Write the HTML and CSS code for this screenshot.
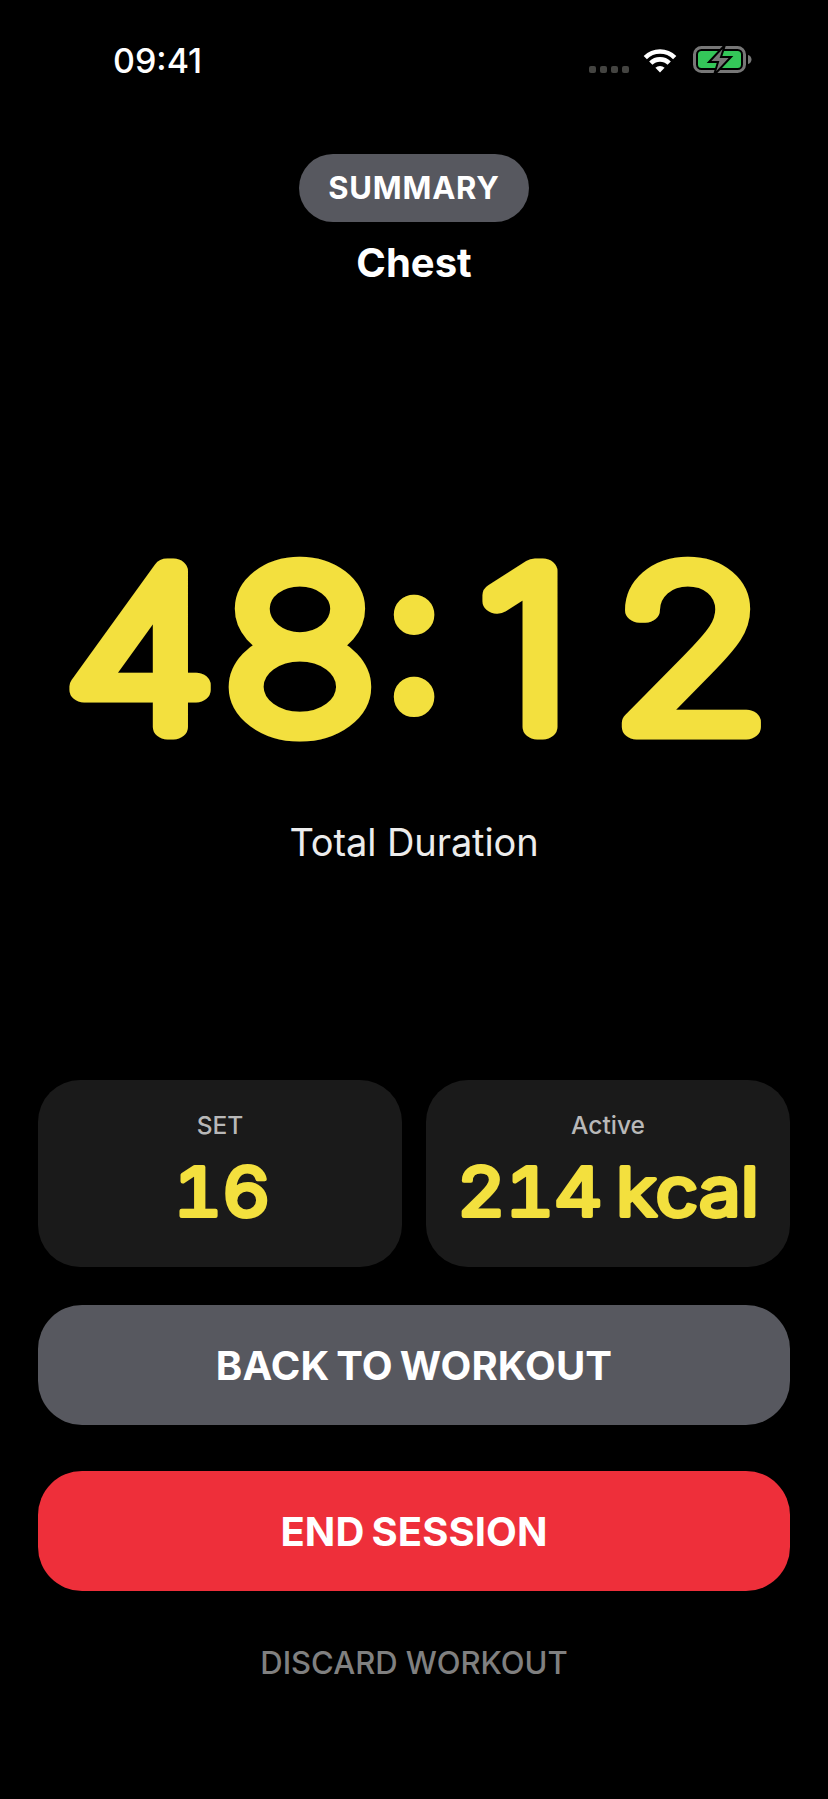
FILE: index.html
```html
<!DOCTYPE html>
<html lang="en">
<head>
  <meta charset="UTF-8">
  <meta name="viewport" content="width=device-width, initial-scale=1.0">
  <title>Summary</title>
  <link rel="stylesheet" href="styles.css">
</head>
<body>
  <div id="screen">
    <div class="status-bar">
      <span class="clock">09:41</span>
      <div class="status-icons">
        <div class="signal"><i></i><i></i><i></i><i></i></div>
        <svg class="wifi" width="36" height="26" viewBox="0 0 36 26">
          <path d="M18 25.500l-4.600-4.700a6.500 6.500 0 0 1 9.200 0z" fill="#fff"/>
          <path d="M8.800 16.200a13 13 0 0 1 18.400 0" fill="none" stroke="#fff" stroke-width="4.600"/>
          <path d="M3.300 10.600a20.800 20.800 0 0 1 29.400 0" fill="none" stroke="#fff" stroke-width="4.600"/>
        </svg>
        <svg class="battery" width="59" height="32" viewBox="0 0 59 32">
          <rect x="1.500" y="3.500" width="50" height="24" rx="7" fill="none" stroke="#777" stroke-width="3"/>
          <rect x="5" y="7" width="43" height="17" rx="3.500" fill="#34c759"/>
          <path d="M55 11c2 .4 3.500 2.200 3.500 4.500s-1.500 4.100-3.500 4.500z" fill="#777"/>
          <path d="M32 1L16 18h9l-4 13 17-18h-10z" fill="#777" stroke="#000" stroke-width="2"/>
        </svg>
      </div>
    </div>

    <header class="top">
      <div class="pill">SUMMARY</div>
      <div class="workout-name">Chest</div>
    </header>

    <main class="timer-block">
      <svg class="timer" width="828" height="300" viewBox="0 0 828 300">
        <text class="digits" x="119.700 256.400" y="247">48</text>
        <text class="colon" x="414" y="232">:</text>
        <text class="digits" x="449 590.600" y="247">12</text>
      </svg>
      <div class="timer-label">Total Duration</div>
    </main>

    <section class="stats">
      <div class="card">
        <div class="card-label">SET</div>
        <svg class="card-value" width="364" height="90" viewBox="0 0 364 90">
          <text x="167.300" y="66">16</text>
        </svg>
      </div>
      <div class="card">
        <div class="card-label">Active</div>
        <svg class="card-value" width="364" height="90" viewBox="0 0 364 90">
          <text x="165.500" y="66">214 kcal</text>
        </svg>
      </div>
    </section>

    <button class="btn btn-back">BACK TO WORKOUT</button>
    <button class="btn btn-end">END SESSION</button>
    <button class="btn-discard">DISCARD WORKOUT</button>
  </div>
</body>
</html>
```
FILE: styles.css
```css
body {
  margin: 0;
  background: #000;
  color: #fff;
  font-family: 'Inter', 'Liberation Sans', sans-serif;
}

#screen {
  width: 828px;
  height: 1799px;
  overflow: hidden;
  padding: 0 38px;
  box-sizing: border-box;
}

.status-bar {
  height: 100px;
  margin: 0 -38px;
  padding: 20px 76px 0 113px;
  display: flex;
  justify-content: space-between;
  align-items: center;
  box-sizing: border-box;
}

.clock {
  font-size: 34px;
  font-weight: 500;
}

.status-icons {
  display: flex;
  align-items: center;
}

.signal {
  display: flex;
  gap: 4px;
  margin: 18px 13px 0 0;
}

.signal i {
  width: 7px;
  height: 7px;
  border-radius: 2px;
  background: #444441;
}

.wifi {
  margin-right: 15px;
}

.top {
  margin-top: 54px;
  display: flex;
  flex-direction: column;
  align-items: center;
}

.pill {
  width: 230px;
  height: 68px;
  line-height: 68px;
  text-align: center;
  border-radius: 34px;
  background: #57585f;
  font-size: 31px;
  font-weight: 700;
  letter-spacing: 0.8px;
}

.workout-name {
  margin-top: 16px;
  font-size: 40px;
  line-height: 50px;
  font-weight: 700;
}

.timer-block {
  margin-top: 192px;
  display: flex;
  flex-direction: column;
  align-items: center;
}

.timer {
  flex: none;
}

.timer text {
  font-family: 'Inter', sans-serif;
  text-anchor: middle;
  fill: #f3e03e;
  stroke: #f3e03e;
  stroke-linejoin: round;
}

/* thin glyph + thick round stroke gives the rounded digits,
   scaled wider because the reference digits are wide */
.timer .digits {
  font-size: 214px;
  font-weight: 100;
  stroke-width: 25px;
  transform: scale(1.17, 1);
}

.timer .colon {
  font-size: 220px;
  font-weight: 600;
  stroke-width: 6px;
}

.timer-label {
  margin-top: 39px;
  font-size: 38px;
  line-height: 46px;
  letter-spacing: -0.1px;
  color: #ececec;
}

.stats {
  margin-top: 215px;
  display: flex;
  gap: 24px;
}

.card {
  flex: 1;
  height: 187px;
  border-radius: 42px;
  background: #1a1a1a;
  text-align: center;
  padding-top: 30px;
  box-sizing: border-box;
}

.card-label {
  font-size: 24.500px;
  line-height: 30px;
  font-weight: 500;
  color: #b8b8b8;
}

.card-value {
  display: block;
  margin-top: 10px;
}

.card-value text {
  font-family: 'Inter', sans-serif;
  font-size: 68px;
  font-weight: 400;
  font-variant-numeric: tabular-nums;
  word-spacing: -6px;
  text-anchor: middle;
  fill: #f3e03e;
  stroke: #f3e03e;
  stroke-width: 4px;
  stroke-linejoin: round;
  transform: scale(1.1, 1);
}

.btn {
  display: block;
  width: 100%;
  height: 120px;
  border: none;
  border-radius: 44px;
  color: #fff;
  font-family: inherit;
  font-size: 40px;
  font-weight: 700;
  letter-spacing: 0.1px;
  word-spacing: -2.500px;
  cursor: pointer;
}

.btn-back {
  margin-top: 38px;
  background: #57585f;
}

.btn-end {
  margin-top: 46px;
  background: #ee2f3a;
}

.btn-discard {
  display: block;
  width: 100%;
  margin-top: 48px;
  padding: 0;
  border: none;
  background: none;
  color: #808080;
  font-family: inherit;
  font-size: 31px;
  line-height: 48px;
  font-weight: 500;
  cursor: pointer;
}
```
